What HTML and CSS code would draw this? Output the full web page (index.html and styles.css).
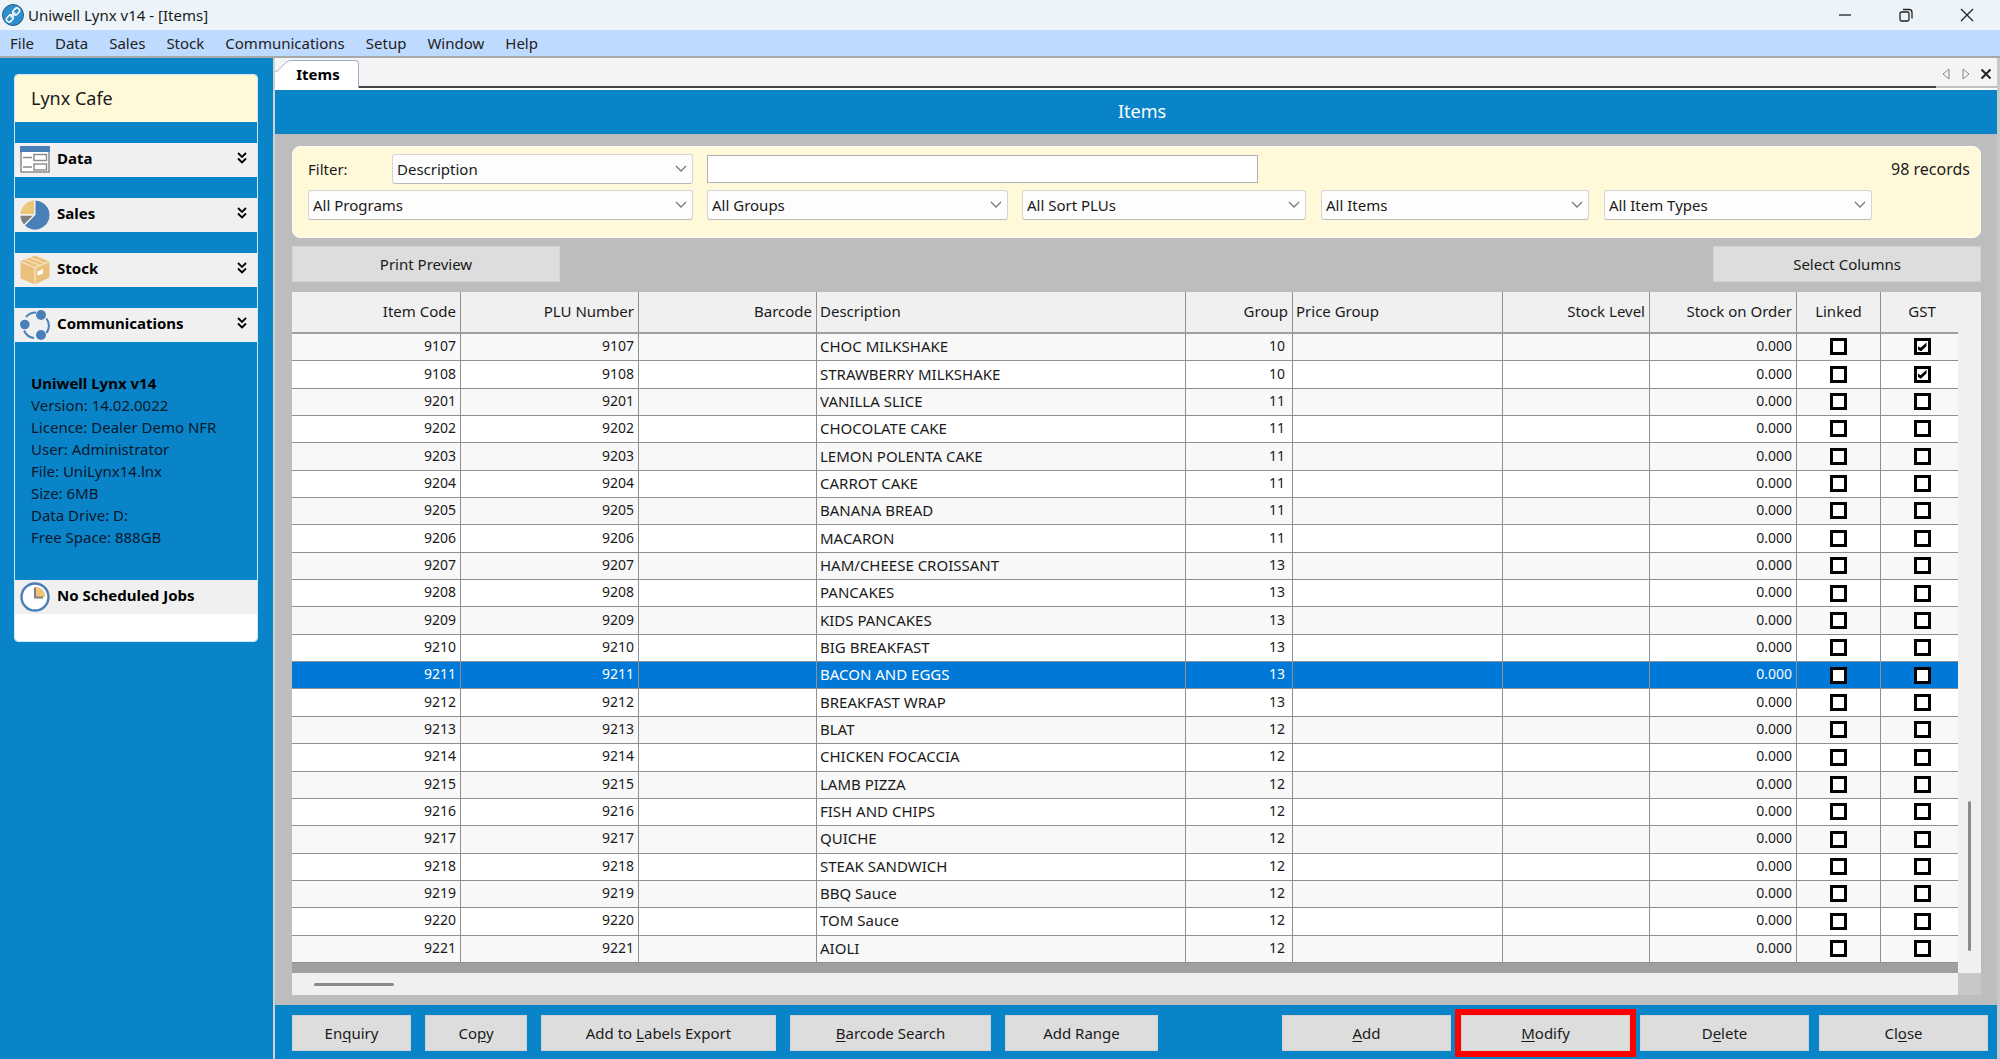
FILE: index.html
```html
<!DOCTYPE html>
<html lang="en">
<head>
    <meta charset="UTF-8">
    <meta name="viewport" content="width=device-width, initial-scale=1.0">
    <title>Uniwell Lynx v14 - [Items]</title>
    <link rel="stylesheet" href="styles.css">
</head>
<body>
    <div class="app">
        <!-- Title Bar -->
        <header class="title-bar">
            <svg class="app-icon" viewBox="0 0 22 22">
                <circle cx="11" cy="11" r="10.5" fill="#2f8fcb" stroke="#1d5f8c"/>
                <g fill="none" stroke="#fff" stroke-width="1.5" transform="rotate(-48 11 11)">
                    <rect x="2.5" y="8.4" width="7.5" height="5.2" rx="2.6"/>
                    <rect x="12" y="8.4" width="7.5" height="5.2" rx="2.6"/>
                    <path d="M7.500 11h7"/>
                </g>
            </svg>
            <h1>Uniwell Lynx v14 - [Items]</h1>
            <div class="window-controls">
                <button type="button" aria-label="Minimize"><svg viewBox="0 0 14 14"><path d="M1 7h12"/></svg></button>
                <button type="button" aria-label="Restore"><svg viewBox="0 0 14 14"><rect x="1" y="4" width="9" height="9" rx="1.5"/><path d="M4 1.5h6a3 3 0 0 1 3 3v6"/></svg></button>
                <button type="button" aria-label="Close window"><svg viewBox="0 0 14 14"><path d="M1 1l12 12M13 1L1 13"/></svg></button>
            </div>
        </header>

        <!-- Menu -->
        <nav class="menu-bar">
            <a href="#">File</a>
            <a href="#">Data</a>
            <a href="#">Sales</a>
            <a href="#">Stock</a>
            <a href="#">Communications</a>
            <a href="#">Setup</a>
            <a href="#">Window</a>
            <a href="#">Help</a>
        </nav>

        <div class="workspace">
            <!-- Sidebar -->
            <aside class="sidebar">
                <div class="side-card">
                    <div class="site-name">Lynx Cafe</div>
                    <button type="button" class="side-item">
                        <svg class="side-icon" viewBox="0 0 30 30">
                            <rect x="1" y="2" width="28" height="25" fill="#fff" stroke="#8a8a8a" stroke-width="1.5"/>
                            <rect x="0" y="1" width="30" height="6" fill="#4a80b8"/>
                            <path d="M3 12.500h9M3 22h9" stroke="#8a8a8a" stroke-width="1.400"/>
                            <g fill="#fff" stroke="#8a8a8a" stroke-width="1.400"><rect x="14" y="9.500" width="12.500" height="6"/><rect x="14" y="19" width="12.500" height="6"/></g>
                        </svg>
                        <span>Data</span>
                        <svg class="chevrons" viewBox="0 0 10 12"><path d="M1 1l4 4 4-4M1 6.500l4 4 4-4"/></svg>
                    </button>
                    <button type="button" class="side-item">
                        <svg class="side-icon" viewBox="0 0 30 30">
                            <path d="M15 0.500A14.500 14.500 0 1 1 5 25.500L15 15Z" fill="#4a80b8"/>
                            <path d="M14 0.500V14H0.500A14.500 14.500 0 0 1 14 0.500Z" fill="#edc67c"/>
                            <path d="M0.500 15.500H13L4 24.500A14 14 0 0 1 0.500 15.500Z" fill="#808080"/>
                            <path d="M15 0v15H0M15 15L4.500 25.500" stroke="#f0f0f0" fill="none"/>
                        </svg>
                        <span>Sales</span>
                        <svg class="chevrons" viewBox="0 0 10 12"><path d="M1 1l4 4 4-4M1 6.500l4 4 4-4"/></svg>
                    </button>
                    <button type="button" class="side-item">
                        <svg class="side-icon" viewBox="0 0 30 30">
                            <path d="M0.500 6L15 0.500 29.500 6.500V22.500L15 29.500 0.500 23.500Z" fill="#ebc07c"/>
                            <path d="M0.500 6.500L15 12.500 29.500 6.500M15 12.500V29.500M5 4.500L20 10.500M10 2.500L25 8.500" fill="none" stroke="#f7e6cb" stroke-width="1.300"/>
                            <path d="M17.500 16.500l5.500-2.500v4.500l-5.500 2z" fill="#fff"/>
                        </svg>
                        <span>Stock</span>
                        <svg class="chevrons" viewBox="0 0 10 12"><path d="M1 1l4 4 4-4M1 6.500l4 4 4-4"/></svg>
                    </button>
                    <button type="button" class="side-item">
                        <svg class="side-icon" viewBox="0 0 30 30">
                            <g fill="none" stroke="#4a80b8" stroke-width="2"><path d="M6 7A12.500 12.500 0 0 1 16 2.500M26.500 8.500A13 13 0 0 1 26.500 23M14 28A13 13 0 0 1 4 20.500"/></g>
                            <g fill="#4a80b8"><circle cx="21" cy="5" r="5"/><circle cx="4.800" cy="14.500" r="4.800"/><circle cx="21" cy="25" r="5"/></g>
                        </svg>
                        <span>Communications</span>
                        <svg class="chevrons" viewBox="0 0 10 12"><path d="M1 1l4 4 4-4M1 6.500l4 4 4-4"/></svg>
                    </button>
                    <div class="side-info">
                        <strong>Uniwell Lynx v14</strong>
                        <span>Version: 14.02.0022</span>
                        <span>Licence: Dealer Demo NFR</span>
                        <span>User: Administrator</span>
                        <span>File: UniLynx14.lnx</span>
                        <span>Size: 6MB</span>
                        <span>Data Drive: D:</span>
                        <span>Free Space: 888GB</span>
                    </div>
                    <button type="button" class="side-item side-jobs">
                        <svg class="side-icon" viewBox="0 0 30 30">
                            <circle cx="15" cy="15" r="13.500" fill="#fff" stroke="#4a80b8" stroke-width="2.400"/>
                            <path d="M15 4.500A10.500 10.500 0 0 1 25.500 15H15Z" fill="#edc67c"/>
                            <path d="M15 5.500V15.500H23" fill="none" stroke="#808080" stroke-width="2"/>
                        </svg>
                        <span>No Scheduled Jobs</span>
                    </button>
                </div>
            </aside>

            <main class="content">
                <!-- Tabs -->
                <div class="tab-strip">
                    <svg class="tab-slope" viewBox="0 0 16 30"><path d="M0 30V14C6 12 9 3 16 2.500V30Z" fill="#fff"/><path d="M0 14C6 12 9 3 16 2.500" fill="none" stroke="#9bb0cc"/></svg>
                    <button type="button" class="tab">Items</button>
                    <div class="tab-rule"></div>
                    <div class="tab-nav">
                        <button type="button" aria-label="Previous tab"><svg viewBox="0 0 12 12"><path d="M9 1v10L3 6z"/></svg></button>
                        <button type="button" aria-label="Next tab"><svg viewBox="0 0 12 12"><path d="M3 1v10l6-5z"/></svg></button>
                        <button type="button" aria-label="Close tab" class="tab-close"><svg viewBox="0 0 12 12"><path d="M1.500 1.500l9 9M10.500 1.500l-9 9"/></svg></button>
                    </div>
                </div>
                <h2 class="page-title">Items</h2>

                <div class="page-body">
                    <!-- Filters -->
                    <section class="filters">
                        <div class="filter-row">
                            <label for="filterBy">Filter:</label>
                            <select id="filterBy" class="filter-by"><option>Description</option></select>
                            <input type="text" class="filter-text" aria-label="Filter text">
                            <span class="record-count">98 records</span>
                        </div>
                        <div class="filter-row">
                            <select class="programs" aria-label="Programs"><option>All Programs</option></select>
                            <select class="groups" aria-label="Groups"><option>All Groups</option></select>
                            <select class="sort-plus" aria-label="Sort PLUs"><option>All Sort PLUs</option></select>
                            <select class="items" aria-label="Items"><option>All Items</option></select>
                            <select class="items" aria-label="Item types"><option>All Item Types</option></select>
                        </div>
                    </section>

                    <div class="table-tools">
                        <button type="button" class="btn">Print Preview</button>
                        <button type="button" class="btn">Select Columns</button>
                    </div>

                    <!-- Items table -->
                    <div class="grid-view">
                        <div class="table-wrap">
                            <table>
                                <colgroup>
                                    <col class="col-code">
                                    <col class="col-plu">
                                    <col class="col-plu">
                                    <col class="col-desc">
                                    <col class="col-group">
                                    <col class="col-price">
                                    <col class="col-stock">
                                    <col class="col-stock">
                                    <col class="col-linked">
                                    <col class="col-gst">
                                </colgroup>
                                <thead>
                                    <tr>
                                        <th class="num">Item Code</th>
                                        <th class="num">PLU Number</th>
                                        <th class="num">Barcode</th>
                                        <th>Description</th>
                                        <th class="num">Group</th>
                                        <th>Price Group</th>
                                        <th class="num">Stock Level</th>
                                        <th class="num">Stock on Order</th>
                                        <th class="check">Linked</th>
                                        <th class="check">GST</th>
                                    </tr>
                                </thead>
                                <tbody id="itemRows"></tbody>
                            </table>
                        </div>
                        <div class="scroll-v"><div class="thumb"></div></div>
                        <div class="scroll-h"><div class="thumb"></div></div>
                        <div class="scroll-corner"></div>
                    </div>
                </div>

                <!-- Actions -->
                <footer class="actions">
                    <button type="button" class="btn btn-enquiry">En<u>q</u>uiry</button>
                    <button type="button" class="btn btn-copy">Co<u>p</u>y</button>
                    <button type="button" class="btn btn-labels">Add to <u>L</u>abels Export</button>
                    <button type="button" class="btn btn-barcode"><u>B</u>arcode Search</button>
                    <button type="button" class="btn btn-range">Add Range</button>
                    <div class="actions-right">
                        <button type="button" class="btn"><u>A</u>dd</button>
                        <button type="button" class="btn btn-modify"><u>M</u>odify</button>
                        <button type="button" class="btn">D<u>e</u>lete</button>
                        <button type="button" class="btn">Cl<u>o</u>se</button>
                    </div>
                </footer>
            </main>
        </div>
    </div>

    <script src="items.js"></script>
</body>
</html>
```

FILE: styles.css
```css
* {
    box-sizing: border-box;
}

body {
    margin: 0;
    font-family: "Noto Sans", "Open Sans", sans-serif;
    font-size: 15px;
    line-height: 20px;
    color: #1a1a1a;
}

button, select, input {
    font: inherit;
    color: inherit;
}

button {
    padding: 0;
    border: none;
    background: none;
    cursor: pointer;
}

.app {
    display: flex;
    flex-direction: column;
    height: 100vh;
    min-height: 900px;
}

/* Title bar */
.title-bar {
    display: flex;
    align-items: center;
    height: 30px;
    padding-left: 2px;
    background: #edf4f9;
}

.app-icon {
    width: 22px;
    height: 22px;
    margin-right: 4px;
}

.title-bar h1 {
    margin: 0;
    font-size: 15px;
    font-weight: normal;
}

.window-controls {
    display: flex;
    margin-left: auto;
    padding-right: 3px;
}

.window-controls button {
    display: flex;
    align-items: center;
    justify-content: center;
    width: 61px;
    height: 30px;
}

.window-controls svg {
    width: 14px;
    height: 14px;
    fill: none;
    stroke: #222;
    stroke-width: 1.3;
}

/* Menu */
.menu-bar {
    display: flex;
    gap: 21px;
    height: 28px;
    padding: 3px 10px;
    background: #bfdaff;
    border-bottom: 2px solid #a8a8a8;
}

.menu-bar a {
    color: #222;
    text-decoration: none;
}

.workspace {
    display: flex;
    flex: 1;
    min-height: 0;
}

/* Sidebar */
.sidebar {
    width: 273px;
    padding: 16px 15px 16px 14px;
    background: #0a84c8;
}

.side-card {
    border: 1px solid #cfe8f8;
    border-radius: 4px;
    background: #0a84c8;
    overflow: hidden;
}

.site-name {
    height: 47px;
    padding: 0 16px;
    background: #fff9da;
    font-size: 18px;
    line-height: 47px;
}

.side-item {
    display: flex;
    align-items: center;
    gap: 7px;
    width: 100%;
    height: 34px;
    margin-top: 21px;
    padding: 0 10px 0 5px;
    background: #f0f0f0;
    color: #000;
    font-weight: bold;
    text-align: left;
}

.side-item span {
    flex: 1;
    padding-bottom: 4px;
}

.side-icon {
    width: 30px;
    height: 30px;
}

.chevrons {
    width: 10px;
    height: 12px;
    margin-bottom: 5px;
    fill: none;
    stroke: #000;
    stroke-width: 1.8;
}

.side-info {
    display: flex;
    flex-direction: column;
    padding: 30px 16px 32px;
    line-height: 22px;
    color: #08182c;
}

.side-info strong {
    color: #000;
}

.side-jobs {
    margin: 0 0 27px;
    box-shadow: 0 27px 0 #fff;
}

/* Content */
.content {
    display: flex;
    flex-direction: column;
    flex: 1;
    min-width: 0;
    border-left: 2px solid #d0d0d0;
    border-right: 3px solid #c8c8c8;
    background: #bdbdbd;
}

.tab-strip {
    display: flex;
    height: 32px;
    background: #f4f4f4;
    border-bottom: 2px solid #fff;
}

.tab-slope {
    width: 16px;
    height: 30px;
}

.tab {
    width: 68px;
    margin-top: 2px;
    padding: 0 13px 2px 0;
    background: #fff;
    border-top: 1px solid #9bb0cc;
    border-right: 1px solid #9bb0cc;
    border-radius: 0 4px 0 0;
    color: #000;
    font-weight: bold;
}

.tab-rule {
    flex: 1;
    border-bottom: 2px solid #444;
}

.tab-nav {
    display: flex;
    align-items: center;
    gap: 8px;
    padding: 3px 5px 0 4px;
    border-bottom: 2px solid #c0c0c0;
}

.tab-nav button {
    display: flex;
}

.tab-nav svg {
    width: 12px;
    height: 12px;
    fill: none;
    stroke: #888;
}

.tab-nav .tab-close svg {
    stroke: #222;
    stroke-width: 2;
}

.page-title {
    height: 44px;
    margin: 0;
    padding-left: 12px;
    background: #0a84c8;
    color: #fff;
    font-size: 18px;
    font-weight: normal;
    line-height: 42px;
    text-align: center;
}

.page-body {
    display: flex;
    flex-direction: column;
    flex: 1;
    min-height: 0;
    padding: 12px 16px 10px 17px;
}

/* Filters */
.filters {
    display: flex;
    flex-direction: column;
    gap: 6px;
    padding: 7px 10px 17px 15px;
    background: #fff9da;
    border: 1px solid #fffdf0;
    border-radius: 8px;
}

.filter-row {
    display: flex;
    align-items: center;
    gap: 14px;
}

.filter-row label {
    width: 70px;
}

.filter-row select {
    height: 30px;
    padding: 0 24px 0 4px;
    border: 1px solid #d4d4d4;
    border-bottom-color: #bbb;
    border-radius: 3px;
    background: #fdfdfd url("data:image/svg+xml,%3Csvg xmlns='http://www.w3.org/2000/svg' width='12' height='8'%3E%3Cpath d='M1 1l5 5 5-5' fill='none' stroke='%23777' stroke-width='1.300'/%3E%3C/svg%3E") no-repeat right 5px center;
    appearance: none;
}

.filter-row .filter-by {
    width: 301px;
}

.filter-text {
    width: 551px;
    height: 28px;
    padding: 0 5px;
    border: 1px solid #b0b0b0;
    background: #fff;
}

.record-count {
    margin-left: auto;
    font-size: 16px;
}

.programs {
    width: 385px;
}

.groups {
    width: 301px;
}

.sort-plus {
    width: 284px;
}

.items {
    width: 268px;
    margin-left: 1px;
}

.btn {
    height: 36px;
    background: #ddd;
    border: 1px solid #d2d2d2;
}

.table-tools {
    display: flex;
    justify-content: space-between;
    padding: 8px 0 10px;
}

.table-tools .btn {
    width: 268px;
}

/* Table */
.grid-view {
    display: grid;
    grid-template-columns: 1fr 23px;
    grid-template-rows: 1fr 22px;
    flex: 1;
    min-height: 0;
}

.table-wrap {
    padding-bottom: 10px;
    background: #a0a0a0;
    min-height: 0;
}

table {
    width: 100%;
    height: 100%;
    table-layout: fixed;
    border-collapse: separate;
    border-spacing: 0;
    background: #fff;
}

.col-code {
    width: 169px;
}

.col-plu {
    width: 178px;
}

.col-group {
    width: 107px;
}

.col-price {
    width: 210px;
}

.col-stock {
    width: 147px;
}

.col-linked {
    width: 84px;
}

.col-gst {
    width: 77px;
}

th, td {
    padding: 0 4px 2px 3px;
    border-right: 1px solid #909090;
    border-bottom: 1px solid #909090;
    line-height: 20px;
    text-align: left;
    white-space: nowrap;
}

th:last-child, td:last-child {
    border-right: none;
}

th {
    height: 42px;
    background: #f0f0f0;
    border-bottom-width: 2px;
    border-bottom-color: #a0a0a0;
    font-weight: normal;
}

tbody tr:nth-child(odd) {
    background: #f8f8f8;
}

tbody tr.selected {
    background: #0078d7;
    color: #fff;
}

.num {
    text-align: right;
}

td.num {
    font-size: 14px;
}

td.group {
    padding-right: 7px;
}

.check {
    padding: 0 0 2px;
    text-align: center;
}

td.check {
    padding-bottom: 4px;
}

.check:last-child {
    padding-left: 5px;
}

.check input {
    display: inline-grid;
    place-content: center;
    width: 17px;
    height: 17px;
    margin: 0;
    border: 3px solid #000;
    background: #fff;
    appearance: none;
    vertical-align: middle;
}

.check input:checked::before {
    content: '';
    width: 9px;
    height: 9px;
    background: #000;
    clip-path: polygon(0 40%, 35% 60%, 100% 0, 100% 40%, 38% 100%, 0 75%);
}

/* Scrollbars */
.scroll-v {
    display: flex;
    flex-direction: column;
    justify-content: flex-end;
    align-items: center;
    padding-bottom: 22px;
    background: #f0f0f0;
}

.scroll-v .thumb {
    width: 3px;
    height: 150px;
    border-radius: 2px;
    background: #8a8a8a;
}

.scroll-h {
    display: flex;
    align-items: center;
    padding-left: 22px;
    background: #f0f0f0;
}

.scroll-h .thumb {
    width: 80px;
    height: 3px;
    border-radius: 2px;
    background: #8a8a8a;
}

.scroll-corner {
    background: #c8c8c8;
}

/* Actions */
.actions {
    display: flex;
    gap: 14px;
    height: 54px;
    padding: 10px 9px 8px 17px;
    background: #0a84c8;
}

.btn-enquiry {
    width: 119px;
}

.btn-copy {
    width: 102px;
}

.btn-labels {
    width: 235px;
}

.btn-barcode {
    width: 201px;
}

.btn-range {
    width: 153px;
}

.actions-right {
    display: flex;
    gap: 10px;
    margin-left: auto;
}

.actions-right .btn {
    width: 169px;
}

.btn-modify {
    outline: 6px solid #f00;
}

u {
    text-underline-offset: 2px;
}
```

FILE: items.js
```js
// [code, description, group, gst]
const items = [
    [9107, 'CHOC MILKSHAKE', 10, true],
    [9108, 'STRAWBERRY MILKSHAKE', 10, true],
    [9201, 'VANILLA SLICE', 11],
    [9202, 'CHOCOLATE CAKE', 11],
    [9203, 'LEMON POLENTA CAKE', 11],
    [9204, 'CARROT CAKE', 11],
    [9205, 'BANANA BREAD', 11],
    [9206, 'MACARON', 11],
    [9207, 'HAM/CHEESE CROISSANT', 13],
    [9208, 'PANCAKES', 13],
    [9209, 'KIDS PANCAKES', 13],
    [9210, 'BIG BREAKFAST', 13],
    [9211, 'BACON AND EGGS', 13],
    [9212, 'BREAKFAST WRAP', 13],
    [9213, 'BLAT', 12],
    [9214, 'CHICKEN FOCACCIA', 12],
    [9215, 'LAMB PIZZA', 12],
    [9216, 'FISH AND CHIPS', 12],
    [9217, 'QUICHE', 12],
    [9218, 'STEAK SANDWICH', 12],
    [9219, 'BBQ Sauce', 12],
    [9220, 'TOM Sauce', 12],
    [9221, 'AIOLI', 12]
];
const selectedCode = 9211;

document.getElementById('itemRows').innerHTML = items.map(([code, description, group, gst]) => `
    <tr class="${code === selectedCode ? 'selected' : ''}">
        <td class="num">${code}</td>
        <td class="num">${code}</td>
        <td></td>
        <td>${description}</td>
        <td class="num group">${group}</td>
        <td></td>
        <td></td>
        <td class="num">0.000</td>
        <td class="check"><input type="checkbox" aria-label="${description} linked"></td>
        <td class="check"><input type="checkbox" aria-label="${description} GST" ${gst ? 'checked' : ''}></td>
    </tr>
`).join('');
```
